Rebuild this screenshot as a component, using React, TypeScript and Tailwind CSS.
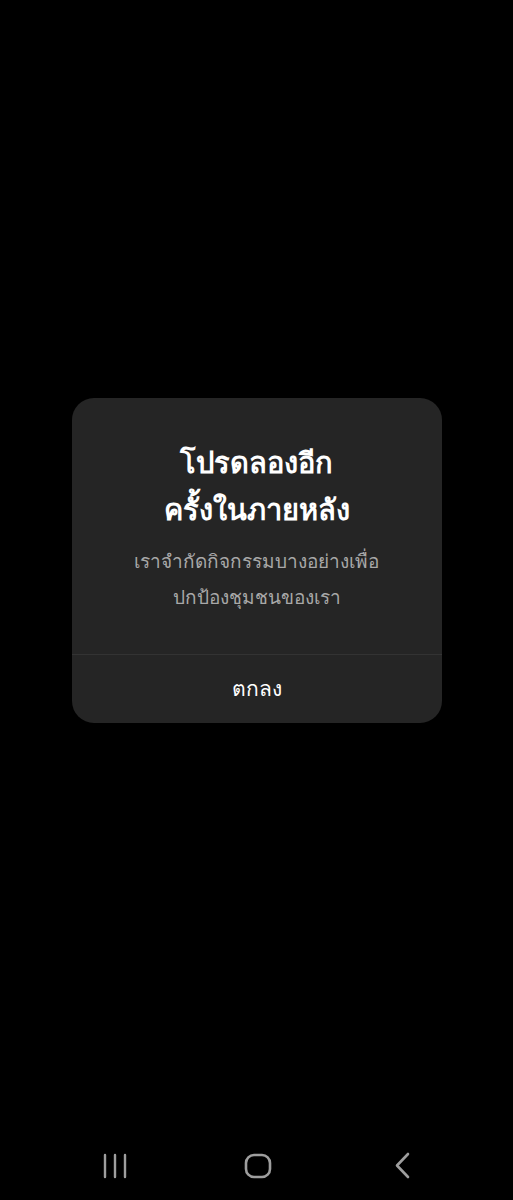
export default function App() {
  return (
    <div
      className="w-[513px] h-[1200px] bg-black flex flex-col"
      style={{ fontFamily: '"Noto Sans", "DejaVu Sans", sans-serif' }}
    >
      <div className="flex-1 flex items-start justify-center pt-[398px]">
        <div className="w-[370px] h-[325px] bg-[#252525] rounded-[22px] flex flex-col">
          <div className="flex-1 flex flex-col items-center px-6 pt-[40px]">
            <h1 className="text-white text-[29px] font-bold leading-[47px] text-center">
              โปรดลองอีก
              <br />
              ครั้งในภายหลัง
            </h1>
            <p className="text-[#a8a8a8] text-[19px] leading-[36px] text-center mt-[11px]">
              เราจำกัดกิจกรรมบางอย่างเพื่อ
              <br />
              ปกป้องชุมชนของเรา
            </p>
          </div>
          <div className="h-px bg-[#333333]" />
          <button className="h-[68px] text-white text-[21px] flex items-center justify-center">
            ตกลง
          </button>
        </div>
      </div>
      <div className="h-[64px] flex items-center justify-between pl-[101px] pr-[99px] pb-[4px]">
        <svg width="28" height="28" viewBox="0 0 28 28" fill="none" stroke="#9e9e9e" strokeWidth="2.4" strokeLinecap="round">
          <path d="M4 3v22M14 3v22M24 3v22" />
        </svg>
        <svg width="28" height="28" viewBox="0 0 28 28" fill="none" stroke="#9e9e9e" strokeWidth="2.6">
          <rect x="2" y="3" width="24" height="22" rx="8" />
        </svg>
        <svg width="28" height="28" viewBox="0 0 28 28" fill="none" stroke="#9e9e9e" strokeWidth="2.6" strokeLinecap="round" strokeLinejoin="round">
          <path d="M22 2L11 13.5 22 25" />
        </svg>
      </div>
    </div>
  );
}
